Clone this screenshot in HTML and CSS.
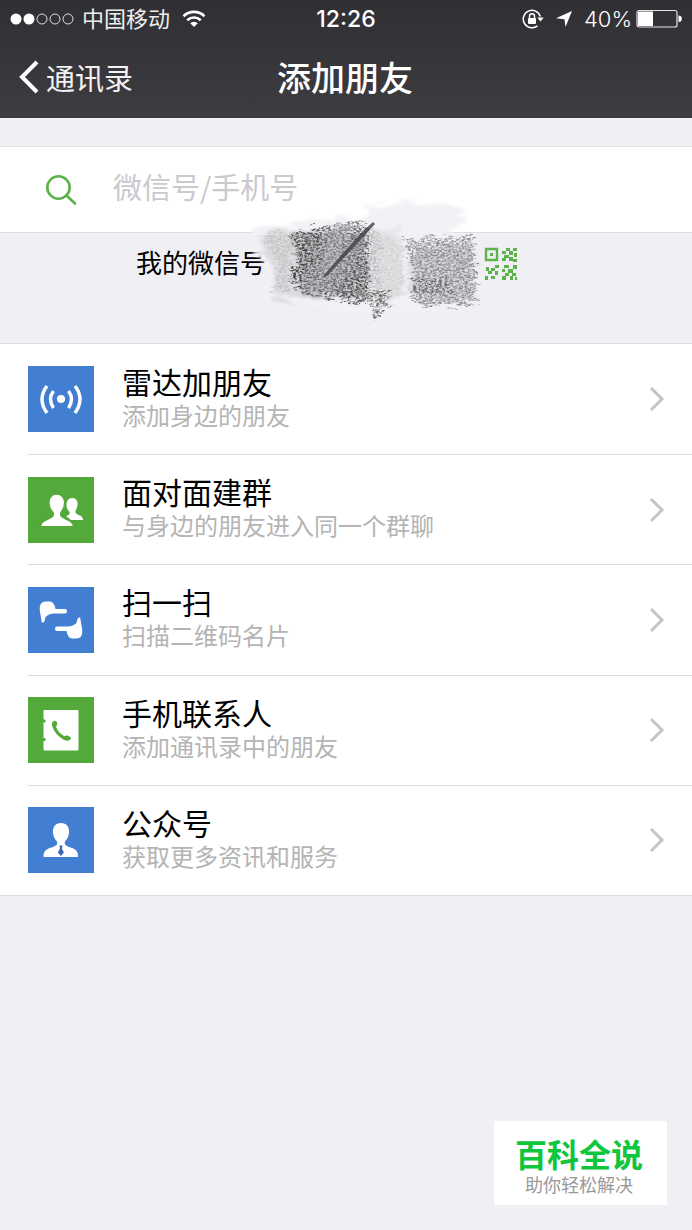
FILE: index.html
```html
<!DOCTYPE html>
<html lang="zh-CN">
<head>
<meta charset="utf-8">
<meta name="viewport" content="width=device-width, initial-scale=1">
<title>添加朋友</title>
<link rel="stylesheet" href="styles.css">
</head>
<body>
<header class="top">
  <div class="status">
    <div class="status-left">
      <svg class="signal" width="64" height="14" viewBox="0 0 64 14" aria-hidden="true">
        <g fill="#fff"><circle cx="6" cy="7" r="5.5"/><circle cx="19" cy="7" r="5.5"/></g>
        <g fill="none" stroke="#ddd" stroke-width="1"><circle cx="32" cy="7" r="5"/><circle cx="45" cy="7" r="5"/><circle cx="58" cy="7" r="5"/></g>
      </svg>
      <span class="carrier">中国移动</span>
      <svg class="wifi" width="24" height="18" viewBox="0 0 24 18" aria-hidden="true">
        <g fill="none" stroke="#fff" stroke-width="2.6"><path d="M1.5 6.2a15 15 0 0 1 21 0"/><path d="M5.3 10.2a9.600 9.600 0 0 1 13.400 0"/></g>
        <path d="M8.200 13.200a5.500 5.500 0 0 1 7.600 0L12 17z" fill="#fff"/>
      </svg>
    </div>
    <time class="clock">12:26</time>
    <div class="status-right">
      <svg width="22" height="20" viewBox="0 0 22 20" aria-hidden="true">
        <path d="M18.300 7.500A8.700 8.700 0 1 0 15.500 16.800" fill="none" stroke="#fff" stroke-width="1.500"/>
        <path d="M15.200 8.500h6.500l-3.200 4z" fill="#fff"/>
        <rect x="6" y="9" width="8" height="6" rx="1" fill="#fff"/>
        <path d="M7.500 9V7.300a2.500 2.500 0 0 1 5 0V9" fill="none" stroke="#fff" stroke-width="1.500"/>
      </svg>
      <svg class="locate" width="18" height="18" viewBox="0 0 18 18" aria-hidden="true"><path d="M17 1 10.500 17 9.500 9.200 1 8.200z" fill="#fff"/></svg>
      <span>40%</span>
      <svg width="46" height="20" viewBox="0 0 46 20" aria-hidden="true">
        <rect x="1" y="1.500" width="40" height="16.500" rx="2" fill="none" stroke="#e4e4e6" stroke-width="1.200"/>
        <rect x="2" y="2.500" width="15" height="14.500" fill="#fff"/>
        <path d="M42.500 6.500a3.300 3.300 0 0 1 0 6.600z" fill="#fff"/>
      </svg>
    </div>
  </div>
  <nav class="nav">
    <a class="back" href="#contacts">
      <svg width="22" height="34" viewBox="0 0 22 34" aria-hidden="true"><path d="M19 2 4 17 19 32" fill="none" stroke="#fff" stroke-width="4"/></svg>
      <span>通讯录</span>
    </a>
    <h1 class="title">添加朋友</h1>
  </nav>
</header>

<main>
  <label class="search">
    <svg width="32" height="32" viewBox="0 0 32 32" aria-hidden="true"><g fill="none" stroke="#5bb24a" stroke-width="2.600"><circle cx="13.500" cy="13.500" r="11.200"/><path d="m21.500 21.500 8.500 8" stroke-linecap="round"/></g></svg>
    <input class="search-input" type="text" placeholder="微信号/手机号" aria-label="微信号/手机号">
  </label>

  <section class="my-id">
    <div class="my-id-line">
      <span class="my-id-label">我的微信号</span>
      <button class="qr" type="button" aria-label="二维码">
        <svg width="34" height="34" viewBox="0 0 34 34" aria-hidden="true">
          <path d="M2 2h11v11H2z" fill="none" stroke="#5cb34c" stroke-width="2.400"/>
          <path fill="#5cb34c" d="M6 6h3v3H6zM22 1h4v3h-4zM29 1h4v3h-4zM18 4h4v3h-4zM25 4h4v4h-4zM30 6h3v4h-3zM20 8h5v3h-5zM18 11h4v3h-4zM25 10h4v4h-4zM29 12h4v3h-4zM11 18h4v3h-4zM7 21h4v3H7zM2 20h3v4H2zM4 24h4v3H4zM11 24h3v4h-3zM1 29h3v4H1zM7 29h4v3H7zM20 18h5v3h-5zM29 18h4v4h-4zM18 22h3v3h-3zM24 22h5v4h-5zM21 26h4v3h-4zM18 29h4v4h-4zM28 26h4v3h-4zM26 29h3v4h-3zM31 30h2v3h-2z"/>
        </svg>
      </button>
      <svg class="scribble" width="250" height="130" viewBox="0 0 250 130" aria-hidden="true">
        <defs>
          <filter id="grain" x="-5%" y="-5%" width="110%" height="110%">
            <feTurbulence type="fractalNoise" baseFrequency="0.35 0.55" numOctaves="5" seed="4" result="n"/>
            <feColorMatrix in="n" type="matrix" values="0 0 0 0 0  0 0 0 0 0  0 0 0 0 0  1.6 0 0 2.200 -1.450" result="a"/>
            <feTurbulence type="fractalNoise" baseFrequency="0.08 0.3" numOctaves="4" seed="8" result="w"/>
            <feDisplacementMap in="SourceGraphic" in2="w" scale="18" xChannelSelector="R" yChannelSelector="G" result="d"/>
            <feComposite in="d" in2="a" operator="in" result="c"/>
            <feGaussianBlur in="c" stdDeviation="0.4"/>
          </filter>
          <filter id="smear" x="-10%" y="-10%" width="120%" height="120%">
            <feTurbulence type="fractalNoise" baseFrequency="0.04 0.2" numOctaves="3" seed="2" result="w"/>
            <feDisplacementMap in="SourceGraphic" in2="w" scale="22" xChannelSelector="R" yChannelSelector="G" result="d"/>
            <feGaussianBlur in="d" stdDeviation="1.500"/>
          </filter>
          <linearGradient id="shade" x1="0" x2="1" y1="0" y2="0.300">
            <stop offset="0" stop-color="#666"/><stop offset="0.300" stop-color="#444446"/><stop offset="0.600" stop-color="#858588"/><stop offset="1" stop-color="#4c4c4e"/>
          </linearGradient>
        </defs>
        <g filter="url(#smear)">
          <path d="M6 30 110 20 130 6 205 6 218 20 200 36 230 100 120 120 20 100 30 80 12 60z" fill="#f2f2f6"/>
          <path d="M10 36 50 32 56 100 26 102 26 70 14 50z" fill="#dcdcdf"/>
          <path d="M46 38 118 32 122 102 56 98z" fill="#c4c4c8"/>
          <path d="M120 32h32l6 66-30 10z" fill="#e3e3e6"/>
          <path d="M162 48h62l3 54-54 4-10-10z" fill="#dadade"/>
        </g>
        <g filter="url(#grain)">
          <path d="M40 36 112 24 120 34 121 108 60 98 40 84 50 62z" fill="url(#shade)"/>
          <path d="M40 36 74 34 72 80 58 76 52 58z" fill="#444" opacity="0.500"/>
          <path d="M76 84 121 78 121 108 70 99z" fill="#444" opacity="0.450"/>
          <path d="M121 30 132 34 134 110 121 108z" fill="#888" opacity="0.450"/>
          <path d="M132 38 155 46 158 86 145 106 132 104z" fill="#aaa" opacity="0.300"/>
          <path d="M12 36 44 36 40 92 24 98 30 66z" fill="#999" opacity="0.400"/>
          <path d="M154 41 226 40 226 84 230 106 180 110 160 100 168 80 160 56z" fill="#707073" opacity="0.750"/>
          <path d="M164 80 200 84 206 98 164 94z" fill="#444" opacity="0.500"/>
          <path d="M122 94 144 96 132 120 126 122z" fill="#555" opacity="0.800"/>
        </g>
        <path d="M125 25 112 37 76 78 75 81 79 79 106 50 127 27z" fill="#404043" opacity="0.800"/>
      </svg>
    </div>
  </section>

  <ul class="list">
    <li><a class="item" href="#radar">
      <svg class="icon" viewBox="0 0 66 66" aria-hidden="true"><rect width="66" height="66" fill="#427fd2"/><circle cx="33" cy="33" r="4" fill="#fff"/><g fill="none" stroke="#fff" stroke-width="3.400"><path d="M19 20q-10 13 0 27M47 20q10 13 0 27M25.500 25q-6 8 0 17M40.500 25q6 8 0 17"/></g></svg>
      <span class="text"><span class="name">雷达加朋友</span><span class="desc">添加身边的朋友</span></span>
      <svg class="arrow" viewBox="0 0 16 26" aria-hidden="true"><path d="m2 2 11 11L2 24"/></svg>
    </a></li>
    <li><a class="item" href="#group">
      <svg class="icon" viewBox="0 0 66 66" aria-hidden="true"><rect width="66" height="66" fill="#54a93b"/><g fill="#fff"><path d="M44 21c4 0 6 3 5.500 7-.3 3-1.500 4.500-2 6-.4 2 .5 3 3 4 3 1 4.500 2.500 4.500 5H43l-5-4c3-1 4-2 3.500-4-2-2-3-4-3-7 0-4 2-7 5.500-7z"/><path stroke="#54a93b" stroke-width="1.400" d="M28.500 17c5.500 0 8.500 4 8 10-.3 4-2 6.500-3.500 8.500-1 3 0 4.500 5 6.500 5 1.800 7.500 3.500 7.500 7.700h-33c0-4.200 2.500-5.900 7.500-7.700 5-2 6-3.500 5-6.500-2-2-3.700-4.500-4-8.500-.5-6 2.500-10 7.500-10z"/></g></svg>
      <span class="text"><span class="name">面对面建群</span><span class="desc">与身边的朋友进入同一个群聊</span></span>
      <svg class="arrow" viewBox="0 0 16 26" aria-hidden="true"><path d="m2 2 11 11L2 24"/></svg>
    </a></li>
    <li><a class="item" href="#scan">
      <svg class="icon" viewBox="0 0 66 66" aria-hidden="true"><rect width="66" height="66" fill="#427fd2"/><g fill="#fff"><path id="hand" d="M12 19q1-4.500 6-4.500h4q4 0 5.500 7.500h9.500q2 0 2 2.200t-2 2.200H26c-3 0-5.500 1-8 3-1 1-1 4-2 5.500-1 1-2.500.5-2.500-1-.5-5-2.500-11-1.500-14.900z"/><use href="#hand" transform="rotate(180 33 33)"/></g></svg>
      <span class="text"><span class="name">扫一扫</span><span class="desc">扫描二维码名片</span></span>
      <svg class="arrow" viewBox="0 0 16 26" aria-hidden="true"><path d="m2 2 11 11L2 24"/></svg>
    </a></li>
    <li><a class="item" href="#phone">
      <svg class="icon" viewBox="0 0 66 66" aria-hidden="true"><rect width="66" height="66" fill="#54a93b"/><rect x="15.500" y="13" width="35" height="40.500" rx="1" fill="#fff"/><g fill="#54a93b"><circle cx="16" cy="24" r="1.700"/><circle cx="16" cy="42.500" r="1.700"/><path d="M25 24.500c1.800-1.800 4.300-.3 4.300 2.200 0 1.500-1.500 2.200-1.100 3.500 1.500 3.700 4 6.500 7.400 8.500 1.700.8 2.700-.6 4.400 0 2.500.8 3.600 2.500 2.700 3.600-2 2-5 1.800-8.200-.2-5-3-8-7-9.900-11.800-.9-2.500-.9-4.600.4-5.800z"/></g></svg>
      <span class="text"><span class="name">手机联系人</span><span class="desc">添加通讯录中的朋友</span></span>
      <svg class="arrow" viewBox="0 0 16 26" aria-hidden="true"><path d="m2 2 11 11L2 24"/></svg>
    </a></li>
    <li><a class="item" href="#official">
      <svg class="icon" viewBox="0 0 66 66" aria-hidden="true"><rect width="66" height="66" fill="#427fd2"/><path fill="#fff" d="M33 16c5.500 0 8.500 4 8 9.500-.3 4.500-2 6.500-4 9-1 3 1 4.500 5.500 6 5 1.500 7.500 3.500 7.500 8.500 0 .6-.4 1-1 1H16.500c-.6 0-1-.4-1-1 0-5 3-7 8-8.500 4.500-1.500 6.500-3 5.500-6-2-2.500-3.700-4.500-4-9-.5-5.500 2.500-9.500 8-9.500z"/><path fill="#3a6caf" d="M31.500 38.500h3l-.6 3 2 4-3 3.500-3-3.500 2-4z"/></svg>
      <span class="text"><span class="name">公众号</span><span class="desc">获取更多资讯和服务</span></span>
      <svg class="arrow" viewBox="0 0 16 26" aria-hidden="true"><path d="m2 2 11 11L2 24"/></svg>
    </a></li>
  </ul>
</main>

<aside class="brand">
  <strong class="brand-name">百科全说</strong>
  <span class="brand-line">助你轻松解决</span>
</aside>
</body>
</html>
```
FILE: styles.css
```css
* { box-sizing: border-box; }

body {
  margin: 0;
  min-height: 100vh;
  background: #efeff4;
  color: #000;
  font-family: "Noto Sans CJK SC", sans-serif;
  font-weight: 400;
}

svg { display: block; flex: none; }
a { color: inherit; text-decoration: none; }

.top {
  background: linear-gradient(#302f34, #3d3c41);
  color: #fff;
}

.status {
  display: grid;
  grid-template-columns: 1fr auto 1fr;
  align-items: center;
  height: 38px;
  padding: 0 10px;
  font-size: 22px;
  line-height: 32px;
}

.status-left,
.status-right {
  display: flex;
  align-items: center;
}

.status-left { gap: 8px; }
.carrier { padding-bottom: 4px; color: #eee; }
.wifi { margin-left: 4px; }
.status-right { justify-content: flex-end; gap: 4px; font-family: Inter, sans-serif; font-weight: 300; }
.locate { margin: 0 7px; }
.clock { font-family: Inter, sans-serif; font-size: 23px; font-weight: 500; }

.nav {
  display: grid;
  grid-template-columns: 1fr auto 1fr;
  align-items: center;
  height: 80px;
  padding: 0 20px 2px 18px;
}

.back {
  display: flex;
  align-items: center;
  gap: 6px;
  color: #f2f2f2;
  font-size: 29px;
}

.title {
  margin: 0;
  font-size: 34px;
  line-height: 48px;
  font-weight: 500;
}

.search {
  display: flex;
  align-items: center;
  gap: 36px;
  height: 87px;
  margin-top: 28px;
  padding: 0 45px;
  background: #fff;
  border-top: 1px solid #dedee2;
  border-bottom: 1px solid #dedee2;
}

.search-input {
  flex: 1;
  min-width: 0;
  padding: 0 0 8px;
  border: 0;
  outline: 0;
  background: none;
  font: inherit;
  font-size: 29px;
}

.search-input::placeholder { color: #c9c9ce; opacity: 1; }

.my-id {
  display: flex;
  justify-content: center;
  height: 110px;
  padding-top: 12px;
}

.my-id-line {
  position: relative;
  display: flex;
  align-items: center;
  justify-content: space-between;
  width: 382px;
  height: 38px;
  margin-left: -38px;
  font-size: 26px;
}

.my-id-label { padding-bottom: 6px; }
.qr { padding: 0; border: 0; background: none; }
.scribble { position: absolute; left: 112px; top: -48px; }

.list {
  display: grid;
  grid-auto-rows: 1fr;
  min-height: 553px;
  margin: 0;
  padding: 0;
  list-style: none;
  background: #fff;
  border-top: 1px solid #dedee2;
  border-bottom: 1px solid #dedee2;
}

.list li { display: grid; padding-left: 28px; }

.item {
  display: flex;
  align-items: center;
  gap: 28px;
  padding-right: 27px;
}

.list li + li .item { border-top: 1px solid #dedee2; }

.icon { width: 66px; height: 66px; }

.text {
  display: flex;
  flex: 1;
  flex-direction: column;
  padding-bottom: 5px;
}

.name { font-size: 30px; line-height: 36px; }

.desc {
  color: #b4b4b4;
  font-size: 24px;
  line-height: 32px;
}

.arrow {
  width: 16px;
  height: 26px;
  fill: none;
  stroke: #c4c4c8;
  stroke-width: 3;
}

.brand {
  position: fixed;
  right: 25px;
  bottom: 25px;
  display: flex;
  flex-direction: column;
  align-items: center;
  padding: 14px 24px 8px 21px;
  background: #fff;
}

.brand-name {
  color: #0fc63c;
  font-size: 32px;
  line-height: 36px;
  font-weight: 700;
}

.brand-line {
  color: #999;
  font-size: 18px;
  line-height: 26px;
}
```
